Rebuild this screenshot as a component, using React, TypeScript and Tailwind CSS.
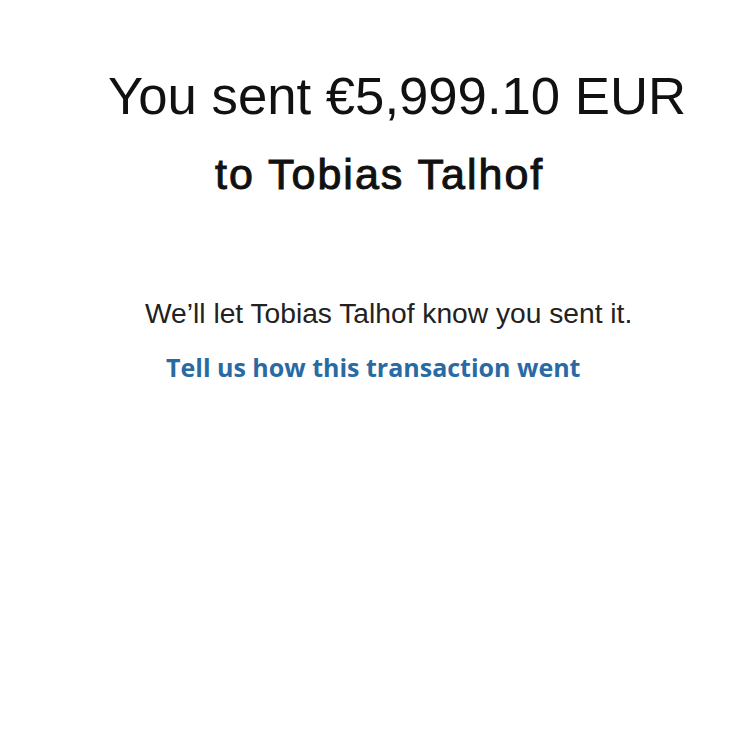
import React from "react";

export default function App() {
  return (
    <div className="w-[750px] h-[742px] bg-white flex flex-col" style={{ fontFamily: '"Liberation Sans", Arial, sans-serif' }}>
      <div className="pt-[68px] pl-[108px] text-[52.7px] leading-[56px] text-[#111] whitespace-nowrap">You sent €5,999.10 EUR</div>
      <div className="pt-[26px] pl-[215px] text-[43px] leading-[48px] tracking-[2px] [-webkit-text-stroke:1px_#111] text-[#111] whitespace-nowrap">to Tobias Talhof</div>
      <div className="pt-[99px] pl-[145px] text-[28.2px] leading-[32px] text-[#222] whitespace-nowrap">We’ll let Tobias Talhof know you sent it.</div>
      <div className="pt-[22px] pl-[166px] text-[25px] leading-[32px] font-bold text-[#2a6aa3] whitespace-nowrap" style={{ fontFamily: '"Open Sans", sans-serif' }}>Tell us how this transaction went</div>
    </div>
  );
}
